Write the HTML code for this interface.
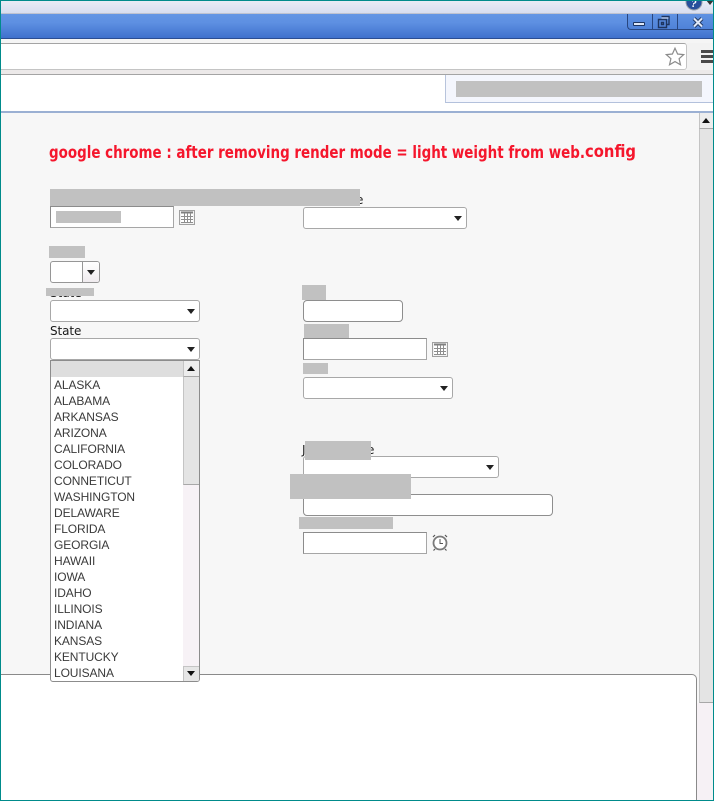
<!DOCTYPE html>
<html>
<head>
<meta charset="utf-8">
<style>
html,body{margin:0;padding:0}
body{width:714px;height:801px;position:relative;overflow:hidden;background:#f7f7f7;font-family:"Liberation Sans",sans-serif}
.a{position:absolute}
.g{position:absolute;background:#c1c1c1}
.in{position:absolute;box-sizing:border-box;background:#fff;border:1px solid #a6a6a6;border-top-color:#8c8c8c;border-left-color:#8c8c8c}
.sel,.rd{position:absolute;box-sizing:border-box;background:#fff;border:1px solid #a8a8a8;border-radius:3px;height:22px}
.rd{border-color:#8e8e8e;border-radius:4px}
.sel:after{content:"";position:absolute;right:4px;top:8px;border:4px solid transparent;border-top:5px solid #222;border-bottom:0}
.it{position:absolute;left:3px;font-size:12px;line-height:16px;height:16px;color:#3a3a3a;white-space:nowrap;letter-spacing:-.1px}
svg{position:absolute;overflow:visible}
</style>
</head>
<body>
<!-- top chrome -->
<div class="a" style="left:0;top:0;width:714px;height:13px;background:linear-gradient(#eaedf6,#d8def0)"></div>
<div class="a" style="left:0;top:13px;width:714px;height:1px;background:#bfc3d0"></div>
<div class="a" style="left:0;top:14px;width:714px;height:24px;background:linear-gradient(#6496e4,#5e90e2 35%,#3f71cd)"></div>
<div class="a" style="left:0;top:38px;width:714px;height:1px;background:#2b4d92"></div>
<div class="a" style="left:0;top:39px;width:714px;height:4px;background:#f5f5f5"></div>
<div class="a" style="left:0;top:43px;width:687px;height:27px;box-sizing:border-box;background:#fff;border:1px solid #c4c4c4;border-top:1px solid #a4a4a4;border-left:0;border-radius:0 3px 3px 0"></div>
<div class="a" style="left:687px;top:43px;width:27px;height:27px;background:#f2f2f2"></div>
<div class="a" style="left:0;top:70px;width:714px;height:4px;background:#ece9e9"></div>
<div class="a" style="left:0;top:74px;width:714px;height:1px;background:#a4a4a4"></div>
<div class="a" style="left:0;top:75px;width:714px;height:36px;background:#fff"></div>
<div class="a" style="left:0;top:111px;width:714px;height:2px;background:#9bb0d3"></div>
<div class="a" style="left:445px;top:75px;width:269px;height:28px;box-sizing:border-box;background:#f4f6fd;border-left:1px solid #b8c4dc;border-bottom:1px solid #b3c1dc"></div>
<div class="g" style="left:456px;top:81px;width:246px;height:16px"></div>

<!-- window buttons -->
<div class="a" style="left:627px;top:14px;width:87px;height:16px;box-sizing:border-box;border:1px solid #28467f;border-top:0;border-right:0;border-radius:0 0 0 4px;background:linear-gradient(#5f92e2,#4f82d8)"></div>
<div class="a" style="left:652px;top:14px;width:1px;height:16px;background:#28467f"></div>
<div class="a" style="left:677px;top:14px;width:1px;height:16px;background:#28467f"></div>
<div class="a" style="left:633px;top:22px;width:12px;height:4px;box-sizing:border-box;background:#dfe8f8;border:1px solid #1e3560;border-radius:1px"></div>
<svg style="left:657px;top:15px" width="14" height="14" viewBox="0 0 14 14"><path d="M4.5 1.5h7.5v8h-2M1.5 4.5h8v8h-8z M4.5 7.5h2v2h-2z" fill="none" stroke="#1e3560" stroke-width="1.4"/><path d="M4.5 3h7" stroke="#dfe8f8"/></svg>
<svg style="left:692px;top:17px" width="12" height="11" viewBox="0 0 12 11"><path d="M2 1.5l8 8M10 1.5l-8 8" stroke="#1e3560" stroke-width="4"/><path d="M2 1.5l8 8M10 1.5l-8 8" stroke="#dfe8f8" stroke-width="2"/></svg>
<svg style="left:686px;top:0" width="20" height="12" viewBox="0 0 20 12"><circle cx="8" cy="2" r="8" fill="#28509c" stroke="#9aa0ac" stroke-width="1"/><text x="8" y="7" font-family="'Liberation Serif',serif" font-weight="bold" font-style="italic" font-size="11" fill="#fff" text-anchor="middle">?</text></svg>
<svg style="left:706px;top:0" width="8" height="6" viewBox="0 0 8 6"><path d="M0 0h8l-4 5z" fill="#333"/></svg>

<!-- star + menu -->
<svg style="left:665px;top:47px" width="20" height="19" viewBox="0 0 20 19"><path d="M10 1.2l2.6 5.8 6.1.6-4.6 4.1 1.4 6.1-5.5-3.2-5.5 3.2 1.4-6.1L1.3 7.6l6.1-.6z" fill="#fff" stroke="#8c8c8c" stroke-width="1.2"/></svg>
<div class="a" style="left:701px;top:50px;width:13px;height:3px;background:#4a4a4a"></div>
<div class="a" style="left:701px;top:55px;width:13px;height:3px;background:#4a4a4a"></div>
<div class="a" style="left:701px;top:60px;width:13px;height:3px;background:#4a4a4a"></div>

<!-- heading -->
<svg style="left:0;top:0" width="714" height="200"><text x="49" y="158" font-family="'DejaVu Sans',sans-serif" font-weight="bold" font-size="16.5" fill="#f5162c" textLength="536" lengthAdjust="spacingAndGlyphs">google chrome : after removing render mode = light weight from web.</text><text x="585" y="157" font-family="'DejaVu Sans',sans-serif" font-weight="bold" font-size="16.5" fill="#f5162c" textLength="51" lengthAdjust="spacingAndGlyphs">config</text></svg>

<!-- left column -->
<div class="a" style="left:356px;top:193px;font:12px 'DejaVu Sans',sans-serif;color:#222;line-height:14px">e</div>
<div class="g" style="left:50px;top:189px;width:310px;height:17px"></div>
<div class="in" style="left:50px;top:206px;width:124px;height:22px"></div>
<div class="g" style="left:56px;top:211px;width:65px;height:12px"></div>
<svg style="left:179px;top:210px" width="16" height="15" viewBox="0 0 16 15"><rect x=".5" y=".5" width="15" height="14" fill="#f2f2f2" stroke="#a0a0a0"/><rect x="2" y="2" width="12" height="11" fill="#fff"/><path d="M2 2.5h12" stroke="#808080" stroke-width="2"/><path d="M2 6.5h12M2 9.5h12M2 12.5h12M5.5 3v10M8.5 3v10M11.5 3v10" stroke="#8e8e8e"/></svg>

<div class="g" style="left:49px;top:246px;width:36px;height:12px"></div>
<div class="rd" style="left:50px;top:261px;width:50px;border-color:#969696;border-radius:3px"></div>
<div class="a" style="left:82px;top:262px;width:17px;height:20px;background:linear-gradient(#fff,#f0ecef);border-left:1px solid #969696;box-sizing:border-box;border-radius:0 2px 2px 0"></div>
<div class="a" style="left:87px;top:270px;border:4px solid transparent;border-top:5px solid #222;border-bottom:0"></div>

<div class="a" style="left:50px;top:286px;font:12px 'DejaVu Sans',sans-serif;color:#222;line-height:14px">State</div>
<div class="g" style="left:46px;top:288px;width:48px;height:8px"></div>
<div class="sel" style="left:50px;top:300px;width:150px"></div>
<div class="a" style="left:50px;top:324px;font:12px 'DejaVu Sans',sans-serif;color:#1a1a1a;line-height:14px;letter-spacing:-.1px">State</div>
<div class="sel" style="left:50px;top:338px;width:150px"></div>

<!-- right column -->
<div class="sel" style="left:303px;top:207px;width:164px"></div>
<div class="g" style="left:302px;top:285px;width:24px;height:15px"></div>
<div class="rd" style="left:303px;top:300px;width:100px"></div>
<div class="g" style="left:304px;top:324px;width:45px;height:14px"></div>
<div class="in" style="left:303px;top:338px;width:124px;height:22px"></div>
<svg style="left:432px;top:342px" width="16" height="15" viewBox="0 0 16 15"><rect x=".5" y=".5" width="15" height="14" fill="#f2f2f2" stroke="#a0a0a0"/><rect x="2" y="2" width="12" height="11" fill="#fff"/><path d="M2 2.5h12" stroke="#808080" stroke-width="2"/><path d="M2 6.5h12M2 9.5h12M2 12.5h12M5.5 3v10M8.5 3v10M11.5 3v10" stroke="#8e8e8e"/></svg>
<div class="g" style="left:303px;top:363px;width:25px;height:11px"></div>
<div class="sel" style="left:303px;top:377px;width:150px"></div>

<div class="a" style="left:302px;top:443px;font:12px 'DejaVu Sans',sans-serif;color:#222;line-height:14px">J</div>
<div class="a" style="left:367px;top:443px;font:12px 'DejaVu Sans',sans-serif;color:#222;line-height:14px">e</div>
<div class="sel" style="left:303px;top:456px;width:196px"></div>
<div class="g" style="left:305px;top:441px;width:66px;height:19px"></div>
<div class="rd" style="left:303px;top:494px;width:250px"></div>
<div class="g" style="left:290px;top:474px;width:121px;height:25px"></div>
<div class="g" style="left:299px;top:517px;width:94px;height:12px"></div>
<div class="in" style="left:303px;top:532px;width:124px;height:22px"></div>
<svg style="left:432px;top:534px" width="16" height="17" viewBox="0 0 16 17"><circle cx="8" cy="9" r="6.5" fill="#fff" stroke="#7a7a7a" stroke-width="1.8"/><path d="M8 5v4.5h3" fill="none" stroke="#555" stroke-width="1"/><path d="M1 3l2-2M15 3l-2-2M3 15l-1.5 1.5M13 15l1.5 1.5" stroke="#555" stroke-width="1.2"/></svg>

<!-- scrollbar -->
<div class="a" style="left:699px;top:113px;width:14px;height:590px;background:#e4e4e4;border-bottom:1px solid #a8a8a8;border-left:1px solid #c4c4c4;box-sizing:border-box"></div>
<div class="a" style="left:699px;top:113px;width:14px;height:16px;background:#ededed;border-left:1px solid #c4c4c4;border-bottom:1px solid #a8a8a8;box-sizing:border-box"></div>
<div class="a" style="left:702px;top:118px;border:4px solid transparent;border-bottom:5px solid #111;border-top:0"></div>
<div class="a" style="left:697px;top:703px;width:17px;height:98px;background:#f6f1f5"></div>

<!-- lower panel -->
<div class="a" style="left:0;top:674px;width:697px;height:127px;box-sizing:border-box;background:#fff;border-top:1px solid #8a8a8a;border-right:1px solid #8a8a8a;border-radius:0 5px 0 0"></div>

<!-- dropdown -->
<div class="a" style="left:50px;top:360px;width:150px;height:322px;box-sizing:border-box;background:#fff;border:1px solid #8c8c8c;border-radius:0 0 3px 3px;overflow:hidden">
  <div class="a" style="left:0;top:0;width:132px;height:16px;background:#dedede"></div>
  <div class="it" style="top:16px">ALASKA</div>
  <div class="it" style="top:32px">ALABAMA</div>
  <div class="it" style="top:48px">ARKANSAS</div>
  <div class="it" style="top:64px">ARIZONA</div>
  <div class="it" style="top:80px">CALIFORNIA</div>
  <div class="it" style="top:96px">COLORADO</div>
  <div class="it" style="top:112px">CONNETICUT</div>
  <div class="it" style="top:128px">WASHINGTON</div>
  <div class="it" style="top:144px">DELAWARE</div>
  <div class="it" style="top:160px">FLORIDA</div>
  <div class="it" style="top:176px">GEORGIA</div>
  <div class="it" style="top:192px">HAWAII</div>
  <div class="it" style="top:208px">IOWA</div>
  <div class="it" style="top:224px">IDAHO</div>
  <div class="it" style="top:240px">ILLINOIS</div>
  <div class="it" style="top:256px">INDIANA</div>
  <div class="it" style="top:272px">KANSAS</div>
  <div class="it" style="top:288px">KENTUCKY</div>
  <div class="it" style="top:304px">LOUISANA</div>
  <div class="a" style="left:132px;top:0;width:16px;height:320px;background:#f7f2f6"></div>
  <div class="a" style="left:132px;top:16px;width:16px;height:108px;box-sizing:border-box;background:#e4e4e4;border-left:1px solid #c4c4c4;border-bottom:1px solid #a8a8a8"></div>
  <div class="a" style="left:132px;top:0;width:16px;height:16px;box-sizing:border-box;background:#ededed;border-left:1px solid #c4c4c4;border-bottom:1px solid #a8a8a8"></div>
  <div class="a" style="left:136px;top:5px;border:4px solid transparent;border-bottom:5px solid #111;border-top:0"></div>
  <div class="a" style="left:132px;top:305px;width:16px;height:15px;box-sizing:border-box;background:#e6e6e6;border-left:1px solid #c4c4c4;border-top:1px solid #c4c4c4"></div>
  <div class="a" style="left:136px;top:310px;border:4px solid transparent;border-top:5px solid #111;border-bottom:0"></div>
</div>

<!-- teal frame -->
<div class="a" style="left:0;top:0;width:714px;height:801px;box-sizing:border-box;border:1px solid #008b8b;pointer-events:none"></div>
</body>
</html>
